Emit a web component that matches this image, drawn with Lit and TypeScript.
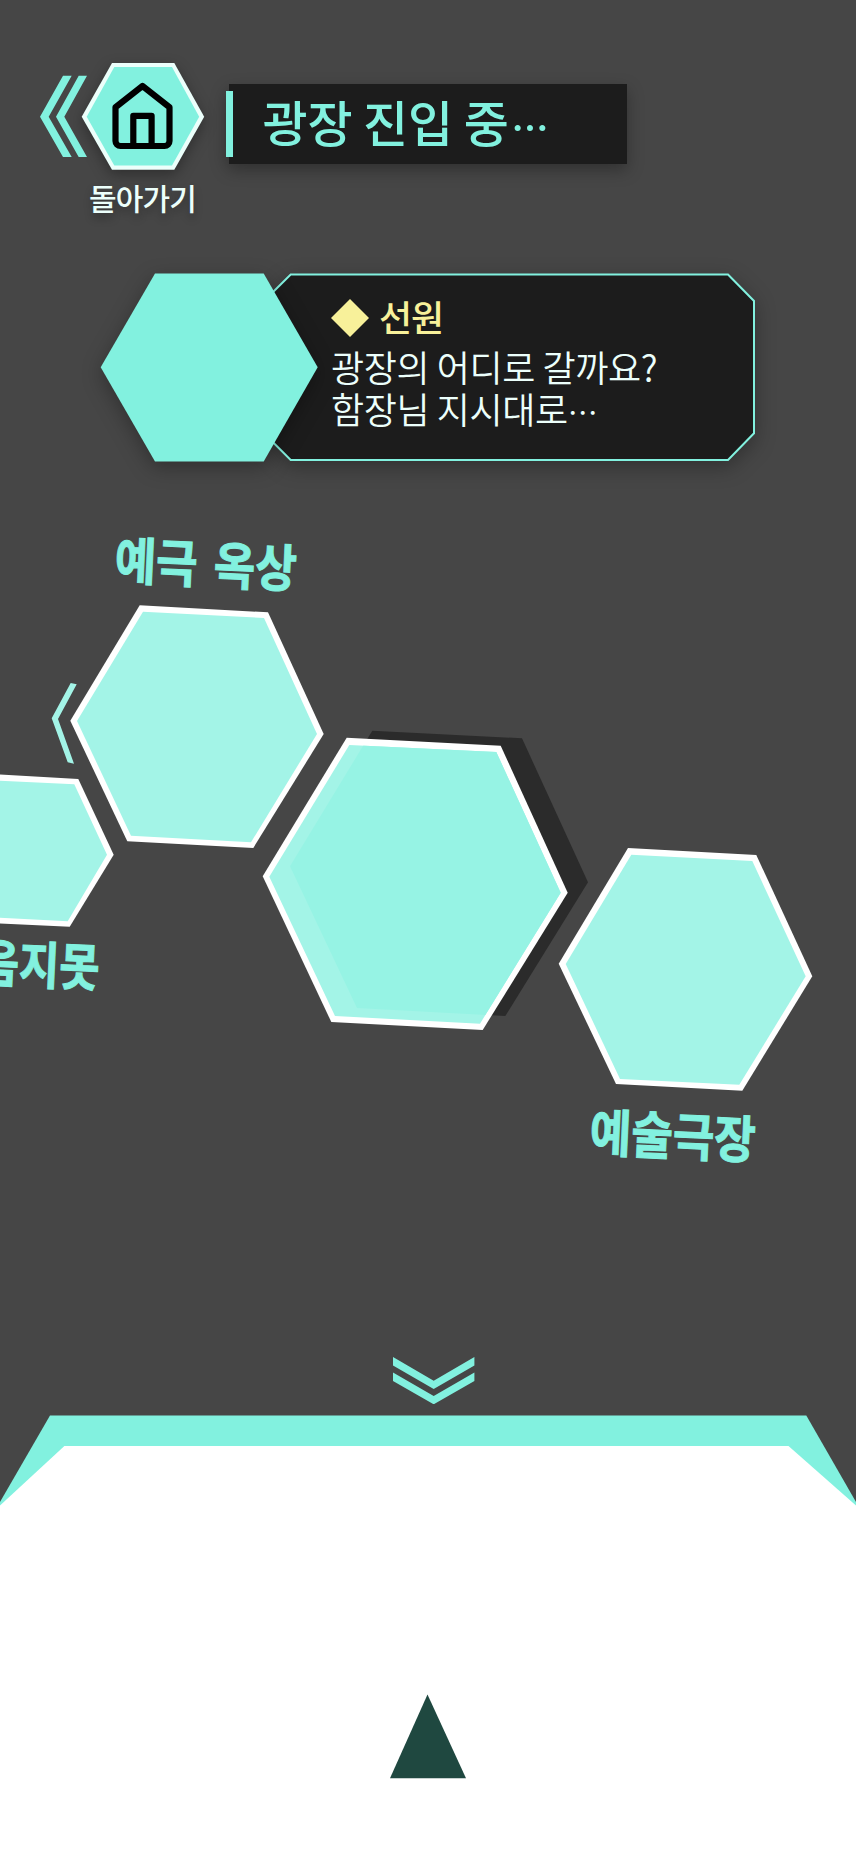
import { LitElement, html, css, svg } from "lit";
import { customElement } from "lit/decorators.js";

interface Place {
  outer: string;
  inner: string;
}

interface Label {
  text: string;
  x: number;
  y: number;
  width: number;
}

const PLACES: Place[] = [
  {
    outer: "139.7,605.3 268,612.3 323.7,734 253.3,848 127.3,841.3 70.3,720.7",
    inner: "143,611.7 264,618 317,734 251,842.3 131,835.7 77,721",
  },
  {
    outer: "-20,773.3 78.3,779 113.7,854.7 69.7,926.7 -20,922.6",
    inner: "-20,779.7 74.3,784.3 107,854.7 67.7,921.3 -20,916.6",
  },
  {
    outer: "346.7,737.7 500.7,745.7 567.7,892.7 482.7,1030 331.3,1022 262.7,876.3",
    inner: "349.3,745 496.3,752 560.7,892.7 480,1023.7 335,1016 269.3,876.7",
  },
  {
    outer: "628,848 756.3,855 812.3,976.3 742.3,1090.7 616,1084 558.7,963.7",
    inner: "631.3,854.7 752.3,861 805.7,976.3 739.3,1084.7 620,1079 565.7,964",
  },
];

const LABELS: Label[] = [
  { text: "예극 옥상", x: 114, y: 579, width: 182 },
  { text: "음지못", x: -22, y: 981, width: 121 },
  { text: "예술극장", x: 589, y: 1151, width: 166 },
];

@customElement("back-button")
class BackButton extends LitElement {
  static styles = css`
    :host { display: block; width: 165px; }
    .art { display: block; overflow: visible; }
    .hex { filter: drop-shadow(0 5px 7px rgba(0, 0, 0, 0.32)); }
    .caption {
      width: 124px;
      margin: 5px 0 0 40.5px;
      text-align: center;
      white-space: nowrap;
      color: #ecfffb;
      font-size: 30px;
      font-weight: 500;
      line-height: 44px;
      letter-spacing: -0.8px;
      text-shadow: 0 5px 8px rgba(0, 0, 0, 0.3);
    }
  `;
  render() {
    return html`
      <svg class="art" width="165" height="107" viewBox="40 63 165 107">
        <path fill="#82f1df" d="M63 75.7h8.7L48.7 116.7 71.7 157H63L40 116.7z M78.7 75.7H87L64.3 116.7 87 157h-8.3L56 116.7z" />
        <g class="hex">
          <path fill="#ecfffb" d="M112 63h62.3L204.2 116.7 174.3 169.7H112L81.7 116.7z" />
          <path fill="#82f1df" d="M114.3 67H172L199.2 116.7 172 165.5H114.3L86.7 116.7z" />
        </g>
        <path
          fill="none" stroke="#000" stroke-width="6.2" stroke-linejoin="round"
          d="M115.5 107.2 142.5 86 169.5 107.2V141a5 5 0 0 1-5 5H120.5a5 5 0 0 1-5-5z M133.3 146V115.8H151.6V146"
        />
      </svg>
      <div class="caption">돌아가기</div>
    `;
  }
}

@customElement("dialog-card")
class DialogCard extends LitElement {
  static styles = css`
    :host { display: grid; width: 655px; height: 189px; }
    .frame, .copy { grid-area: 1 / 1; }
    .frame { display: block; overflow: visible; }
    .card { filter: drop-shadow(0 6px 10px rgba(0, 0, 0, 0.3)); }
    .copy { padding: 22px 0 0 231px; white-space: nowrap; }
    .name {
      display: flex;
      align-items: flex-start;
      gap: 10px;
      height: 50px;
      color: #f8f19a;
      font-size: 36px;
      font-weight: 500;
      line-height: 42px;
      letter-spacing: -1.2px;
    }
    .diamond { margin-top: 4px; }
    .line {
      color: #ecfffb;
      font-size: 36px;
      font-weight: 350;
      line-height: 42px;
      letter-spacing: -0.4px;
    }
    .dots { font-size: 30px; line-height: 30px; }
  `;
  render() {
    return html`
      <svg class="frame" width="655" height="189" viewBox="100 273 655 189">
        <path class="card" fill="#1c1c1c" stroke="#82f1df" stroke-width="2"
          d="M290.7 274.5H728L754 301V433.3L728 460H290.7L264 433.3V301z" />
        <path class="card" fill="#82f1df" d="M155 273.4H263.7L317.7 367.3 263.7 461.6H155L100.7 367.3z" />
      </svg>
      <div class="copy">
        <div class="name">
          <svg class="diamond" width="38" height="38" viewBox="0 0 38 38"><path fill="#f8f19a" d="M19 0 38 19 19 38 0 19z" /></svg>
          <span>선원</span>
        </div>
        <div class="line">광장의 어디로 갈까요?</div>
        <div class="line">함장님 지시대로<span class="dots">…</span></div>
      </div>
    `;
  }
}

@customElement("plaza-map")
class PlazaMap extends LitElement {
  static styles = css`
    :host { display: block; }
    .map { display: block; }
    .outer { fill: #fff; }
    .inner { fill: #a3f4e7; }
    .label {
      fill: #82f1df;
      stroke: #82f1df;
      stroke-width: 1px;
      font-size: 51px;
      font-weight: 700;
      word-spacing: 7px;
    }
  `;
  render() {
    return html`
      <svg class="map" width="856" height="878" viewBox="0 462 856 878">
        <defs>
          <clipPath id="plaza"><polygon points=${PLACES[2].inner} /></clipPath>
        </defs>
        <polygon fill="#2b2b2b" points="372.3,730.7 522,738.3 588,882.3 505.3,1016 357,1008 290,866.3" />
        ${PLACES.map((p) => svg`<polygon class="outer" points=${p.outer} /><polygon class="inner" points=${p.inner} />`)}
        <polygon fill="#96f3e4" clip-path="url(#plaza)" points="372.3,730.7 522,738.3 588,882.3 505.3,1016 357,1008 290,866.3" />
        <polygon fill="#a3f4e7" points="70.7,683 76.7,684.3 58,719 74,763.7 67.7,762.3 51.7,718.3" />
        ${LABELS.map(
          (l) => svg`<text class="label" x=${l.x} y=${l.y} textLength=${l.width} lengthAdjust="spacingAndGlyphs"
            transform=${`rotate(2.7 ${l.x} ${l.y})`}>${l.text}</text>`
        )}
      </svg>
    `;
  }
}

@customElement("app-root")
class AppRoot extends LitElement {
  static styles = css`
    :host {
      display: flex;
      flex-direction: column;
      width: 856px;
      height: 1852px;
      overflow: hidden;
      background: #464646;
      font-family: "Noto Sans CJK KR", "Noto Sans", sans-serif;
    }
    .header {
      display: flex;
      align-items: flex-start;
      box-sizing: border-box;
      height: 273px;
      padding: 63px 0 0 40px;
    }
    .title {
      display: flex;
      align-items: center;
      box-sizing: border-box;
      width: 400.5px;
      height: 80px;
      margin: 21px 0 0 21px;
      background: linear-gradient(#1c1c1c, #1c1c1c) 3px 0 no-repeat;
      filter: drop-shadow(0 6px 8px rgba(0, 0, 0, 0.3));
    }
    .tick { width: 6.5px; height: 66px; background: #82f1df; }
    .heading {
      margin: 0 0 6px 30px;
      color: #82f1df;
      font-size: 49px;
      font-weight: 500;
      line-height: 72px;
      letter-spacing: -0.2px;
      white-space: nowrap;
    }
    .dots { margin-left: 3px; font-size: 37px; font-weight: 700; line-height: 37px; }
    .dialog { margin-left: 100px; }
    .dock { display: flex; flex-direction: column; height: 512px; }
    .arrows { display: block; margin: 17px 0 11px 393px; }
    .sheet { display: block; }
  `;
  render() {
    return html`
      <header class="header">
        <back-button></back-button>
        <div class="title">
          <div class="tick"></div>
          <h1 class="heading">광장 진입 중<span class="dots">…</span></h1>
        </div>
      </header>
      <dialog-card class="dialog"></dialog-card>
      <plaza-map></plaza-map>
      <footer class="dock">
        <svg class="arrows" width="82" height="47" viewBox="393 1357 82 47">
          <path fill="#82f1df" d="M393 1357 433.7 1380.7 474.4 1357V1365.5L433.7 1389 393 1365.5z M393 1372.5 433.7 1396 474.4 1372.5V1381L433.7 1404.3 393 1381z" />
        </svg>
        <svg class="sheet" width="856" height="437" viewBox="0 1415 856 437">
          <path fill="#82f1df" d="M50 1415.4H806.3L856 1502V1852H0V1502z" />
          <path fill="#fff" d="M64.4 1446H788.5L856 1505.5V1852H0V1505.5z" />
          <path fill="#1f4840" d="M427.5 1694.5 466 1778.3H390z" />
        </svg>
      </footer>
    `;
  }
}
